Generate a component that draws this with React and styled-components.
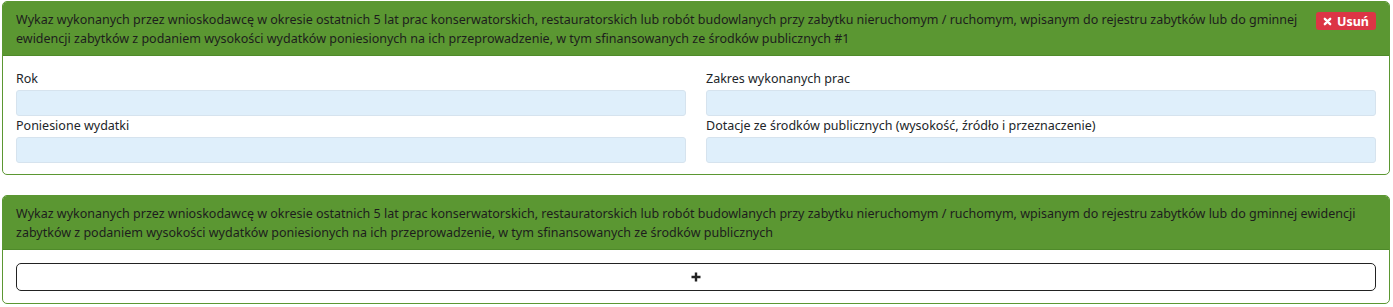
import React from "react";
import styled, { createGlobalStyle } from "styled-components";

const GlobalStyle = createGlobalStyle`
  html, body {
    margin: 0;
    padding: 0;
    background: #ffffff;
  }
  body {
    font-family: "Noto Sans", "Open Sans", "DejaVu Sans", sans-serif;
    font-size: 12.5px;
    color: #212529;
  }
`;

const Page = styled.div`
  display: flex;
  flex-direction: column;
  gap: 20px;
  padding: 1px 3px 0 2px;
`;

const Card = styled.section`
  border: 1px solid #5b9732;
  border-radius: 5px;
  background: #fff;
  overflow: hidden;
`;

const CardHeader = styled.header`
  display: flex;
  align-items: flex-start;
  gap: 8px;
  background: #5b9732;
  border-bottom: 1px solid #4f8a2a;
  padding: 8px 13px 7px 13px;
  min-height: 38px;
`;

const Title = styled.div`
  flex: 1 1 0;
  min-width: 0;
  line-height: 19px;
  color: #1d1d1d;
`;

const DeleteButton = styled.button`
  flex: none;
  display: inline-flex;
  align-items: center;
  gap: 5px;
  margin-top: 2px;
  height: 18px;
  padding: 0 7px;
  border: none;
  border-radius: 3px;
  background: #dc3545;
  color: #fff;
  font-family: inherit;
  font-size: 12.5px;
  font-weight: 700;
`;

const CardBody = styled.div`
  padding: ${p => (p.$tight ? "13px 13px 12px" : "14px 13px 11px")};
`;

const Grid = styled.div`
  display: grid;
  grid-template-columns: 1fr 1fr;
  column-gap: 20px;
  row-gap: 1px;
`;

const Field = styled.label`
  display: flex;
  flex-direction: column;
  gap: 2px;
`;

const LabelText = styled.span`
  line-height: 18px;
  color: #212529;
`;

const Input = styled.div`
  height: 24px;
  border: 1px solid #d6e3ee;
  border-radius: 3px;
  background: #dfeffb;
`;

const AddButton = styled.button`
  display: flex;
  align-items: center;
  justify-content: center;
  width: 100%;
  height: 28px;
  border: 1px solid #222;
  border-radius: 5px;
  background: #fff;
  padding: 0;
`;

const TITLE =
  "Wykaz wykonanych przez wnioskodawcę w okresie ostatnich 5 lat prac konserwatorskich, restauratorskich lub robót budowlanych przy zabytku nieruchomym / ruchomym, wpisanym do rejestru zabytków lub do gminnej ewidencji zabytków z podaniem wysokości wydatków poniesionych na ich przeprowadzenie, w tym sfinansowanych ze środków publicznych";

const fields = [
  "Rok",
  "Zakres wykonanych prac",
  "Poniesione wydatki",
  "Dotacje ze środków publicznych (wysokość, źródło i przeznaczenie)",
];

export default function App() {
  return (
    <>
      <GlobalStyle />
      <Page>
        <Card>
          <CardHeader>
            <Title>{`${TITLE} #1`}</Title>
            <DeleteButton type="button">
              <svg width="9" height="9" viewBox="0 0 10 10">
                <path d="M2 2 L8 8 M8 2 L2 8" stroke="#fff" strokeWidth="2.6" strokeLinecap="round" />
              </svg>
              Usuń
            </DeleteButton>
          </CardHeader>
          <CardBody>
            <Grid>
              {fields.map(f => (
                <Field key={f}>
                  <LabelText>{f}</LabelText>
                  <Input />
                </Field>
              ))}
            </Grid>
          </CardBody>
        </Card>
        <Card>
          <CardHeader>
            <Title>{TITLE}</Title>
          </CardHeader>
          <CardBody $tight>
            <AddButton type="button">
              <svg width="10" height="10" viewBox="0 0 10 10">
                <path d="M5 0.5 V9.5 M0.5 5 H9.5" stroke="#222" strokeWidth="2.4" />
              </svg>
            </AddButton>
          </CardBody>
        </Card>
      </Page>
    </>
  );
}
